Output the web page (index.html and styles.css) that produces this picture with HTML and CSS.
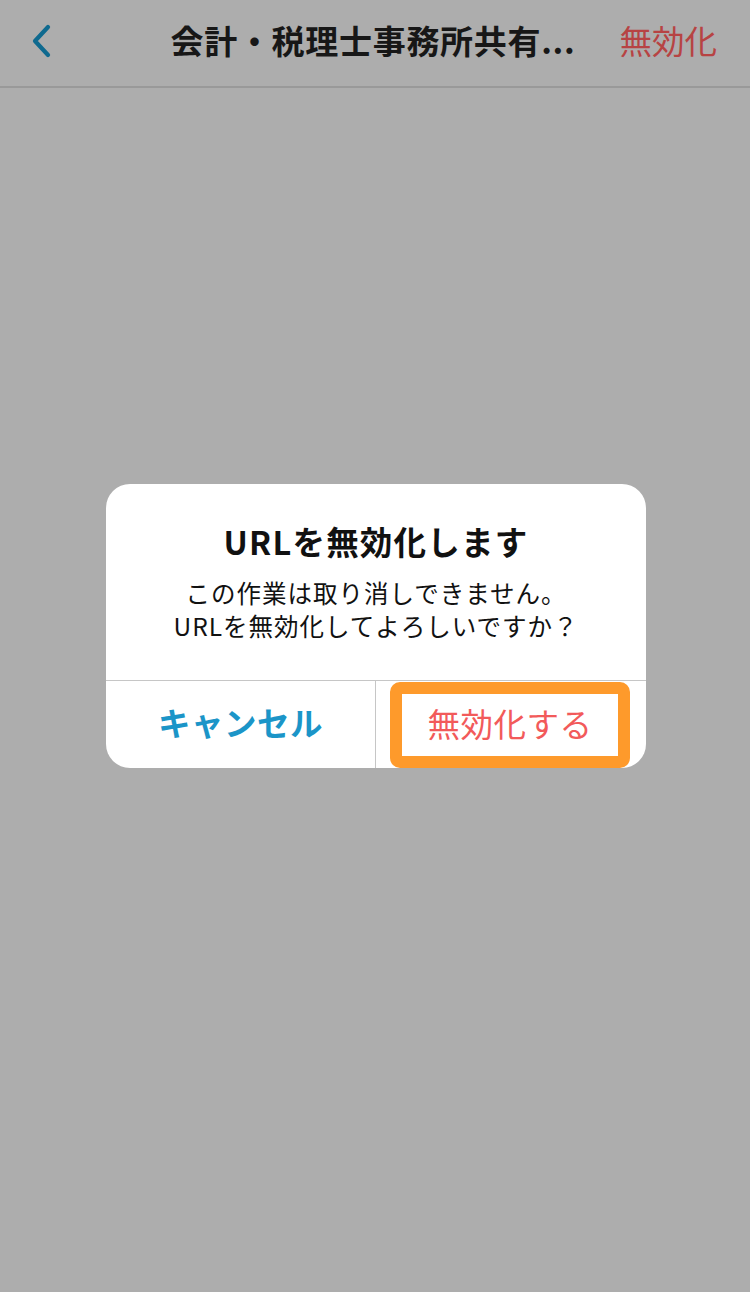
FILE: index.html
```html
<!DOCTYPE html>
<html lang="ja">
<head>
<meta charset="utf-8">
<title>URL無効化</title>
<link rel="stylesheet" href="styles.css">
</head>
<body>
<header class="navbar">
  <div class="nav-left">
    <svg class="back-icon" width="24" height="36" viewBox="0 0 24 36" aria-hidden="true">
      <path d="M16 4 L3 18 L16 32" fill="none" stroke="#0f6a8f" stroke-width="4.2" stroke-linecap="round" stroke-linejoin="round"/>
    </svg>
  </div>
  <div class="nav-title">会計・税理士事務所共有...</div>
  <div class="nav-right">無効化</div>
</header>
<main class="stage">
  <div class="dialog">
    <div class="dialog-body">
      <div class="dialog-title">URLを無効化します</div>
      <div class="dialog-message">この作業は取り消しできません。<br>URLを無効化してよろしいですか？</div>
    </div>
    <div class="dialog-actions">
      <div class="action action-cancel"><span class="label">キャンセル</span></div>
      <div class="action-divider"></div>
      <div class="action action-destructive"><span class="highlight"><span class="label">無効化する</span></span></div>
    </div>
  </div>
</main>
</body>
</html>
```

FILE: styles.css
```css
* { box-sizing: border-box; }
html, body {
  margin: 0;
  padding: 0;
}
body {
  width: 750px;
  height: 1292px;
  background: #adadad;
  font-family: "Noto Sans CJK JP", "Noto Sans", sans-serif;
  overflow: hidden;
}
.navbar {
  height: 88px;
  border-bottom: 2px solid #999999;
  display: grid;
  grid-template-columns: 1fr auto 1fr;
  align-items: center;
  padding-bottom: 6px;
}
.nav-left {
  padding-left: 32px;
  display: flex;
  align-items: center;
  padding-top: 2px;
}
.back-icon { display: block; }
.nav-title {
  font-size: 33px;
  font-weight: 700;
  color: #171717;
  letter-spacing: 0.7px;
  line-height: 40px;
  padding-right: 4px;
}
.nav-right {
  justify-self: end;
  padding-right: 33px;
  font-size: 32.5px;
  color: #b74343;
  line-height: 40px;
}
.stage {
  display: flex;
  justify-content: center;
  padding-top: 396px;
  padding-left: 2px;
}
.dialog {
  width: 540px;
  background: #ffffff;
  border-radius: 24px;
  overflow: hidden;
}
.dialog-body {
  height: 197px;
  padding-top: 37px;
  text-align: center;
  border-bottom: 1px solid #c6c6c6;
}
.dialog-title {
  font-size: 32.5px;
  font-weight: 700;
  color: #111111;
  line-height: 40px;
  letter-spacing: 1.2px;
}
.dialog-message {
  margin-top: 15px;
  font-size: 24.5px;
  color: #111111;
  line-height: 33px;
  letter-spacing: 1px;
}
.dialog-actions {
  height: 87px;
  display: grid;
  grid-template-columns: 269px 1px 1fr;
}
.action {
  display: flex;
  align-items: center;
  justify-content: center;
  font-size: 32.5px;
  line-height: 40px;
}
.label {
  display: block;
  padding-bottom: 6px;
}
.action-cancel {
  color: #1b95c8;
  font-weight: 700;
  letter-spacing: 0.5px;
}
.action-divider {
  background: #c6c6c6;
}
.action-destructive {
  padding: 1px 16px 0 14px;
  align-items: stretch;
}
.highlight {
  flex: 1;
  display: flex;
  align-items: center;
  justify-content: center;
  border: 12px solid #fe9a2b;
  border-radius: 10px;
  color: #f25a5a;
  letter-spacing: 0.5px;
}
.highlight .label {
  padding-bottom: 0;
  margin-top: -4px;
}
```
